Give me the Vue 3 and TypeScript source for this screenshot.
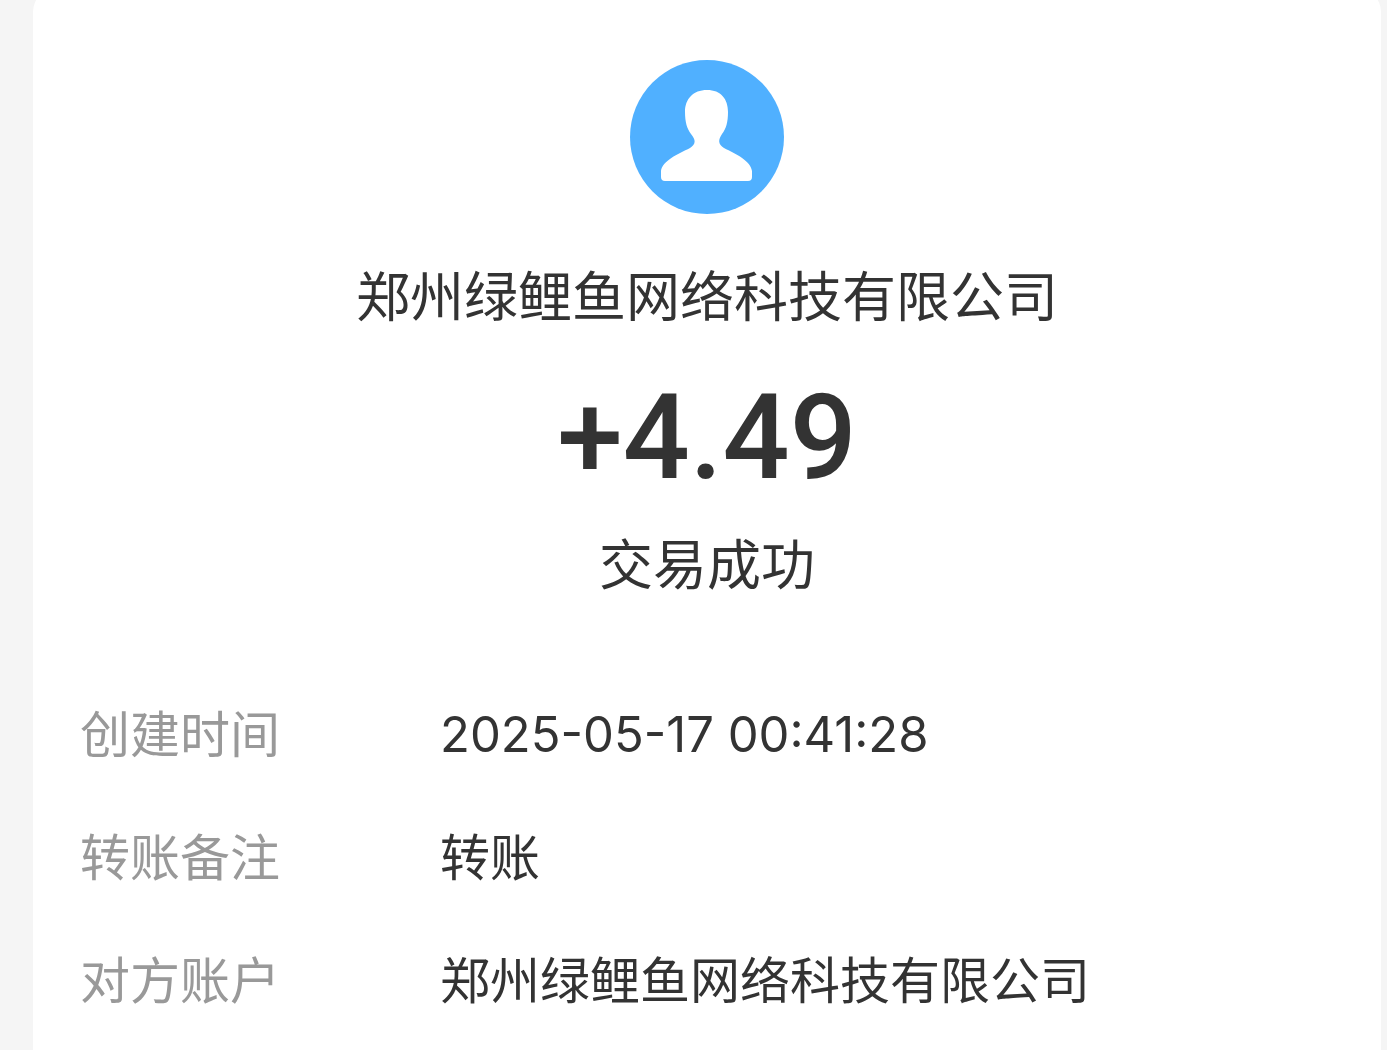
<script setup lang="ts">
interface DetailRow {
  label: string
  value: string
  numeric?: boolean
}

const payee = '郑州绿鲤鱼网络科技有限公司'
const amount = '+4.49'
const status = '交易成功'

const rows: DetailRow[] = [
  { label: '创建时间', value: '2025-05-17 00:41:28', numeric: true },
  { label: '转账备注', value: '转账' },
  { label: '对方账户', value: payee },
]
</script>

<template>
  <main class="card">
    <header class="summary">
      <svg class="avatar" viewBox="0 0 154 154" aria-hidden="true">
        <circle cx="77" cy="77" r="77" fill="#50b0ff" />
        <path
          fill="#fff"
          d="M77 30C63 30 55 39 55 52C55 62 57 69 61 74C66 80 66 84 60 88C48 94 32 101 31 111V117Q31 121 35 121H118Q122 121 122 117V111C121 101 106 94 94 88C88 84 88 80 92 74C96 69 98 62 98 52C98 39 91 30 77 30Z"
        />
      </svg>
      <h1 class="payee">{{ payee }}</h1>
      <p class="amount">{{ amount }}</p>
      <p class="status">{{ status }}</p>
    </header>
    <dl class="details">
      <div v-for="row in rows" :key="row.label" class="row">
        <dt>{{ row.label }}</dt>
        <dd :class="{ numeric: row.numeric }">{{ row.value }}</dd>
      </div>
    </dl>
  </main>
</template>

<style>
body {
  margin: 0;
  background: #f5f5f5;
}
</style>

<style scoped>
/* The card's rounded top edge starts slightly above the viewport. */
.card {
  box-sizing: border-box;
  min-height: calc(100vh + 12px);
  margin: -12px 6px 0 33px;
  padding: 72px 47px 0;
  border-radius: 24px 24px 0 0;
  background: #fff;
  color: #333;
  font-family: Inter, "Noto Sans CJK SC", sans-serif;
}
.summary {
  display: flex;
  flex-direction: column;
  align-items: center;
}
.avatar {
  width: 154px;
  height: 154px;
}
.payee,
.status {
  margin: 0;
  font-size: 54px;
  font-weight: 400;
  line-height: 80px;
}
.payee {
  margin-top: 44px;
}
.amount {
  margin: 38px 0 26px;
  font-family: Roboto, "Liberation Sans", sans-serif;
  font-size: 118px;
  font-weight: 500;
  line-height: 124px;
}
.details {
  margin: 67px 0 0;
}
.row {
  display: flex;
  align-items: center;
  min-height: 123px;
  font-size: 50px;
  line-height: 76px;
}
dt {
  flex: 0 0 360px;
  color: #999;
}
dd {
  margin: 0;
}
.numeric {
  font-size: 49px;
}
</style>
